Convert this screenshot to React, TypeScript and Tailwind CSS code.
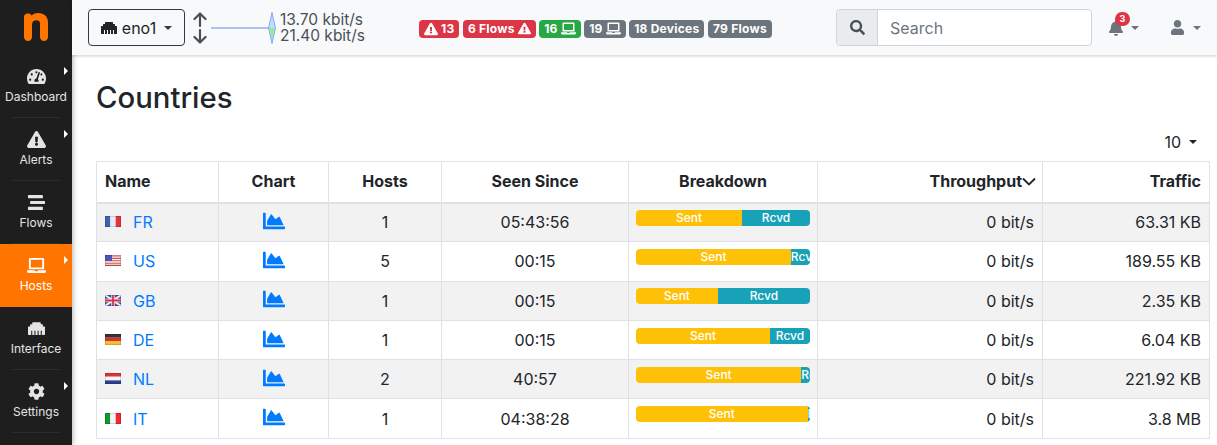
import {
  FaBell,
  FaChartArea,
  FaCog,
  FaEthernet,
  FaExclamationTriangle,
  FaLaptop,
  FaSearch,
  FaStream,
  FaTachometerAlt,
  FaUser,
} from 'react-icons/fa';
import { ReactNode } from 'react';

const menu = [
  { label: 'Dashboard', icon: <FaTachometerAlt size={19} />, arrow: true },
  { label: 'Alerts', icon: <FaExclamationTriangle size={19} />, arrow: true },
  { label: 'Flows', icon: <FaStream size={17} /> },
  { label: 'Hosts', icon: <FaLaptop size={19} />, arrow: true, active: true },
  { label: 'Interface', icon: <FaEthernet size={17} /> },
  { label: 'Settings', icon: <FaCog size={17} />, arrow: true },
];

const flags: Record<string, ReactNode> = {
  FR: (
    <>
      <rect width="5.3" height="11" fill="#3f5fb8" />
      <rect x="5.3" width="5.4" height="11" fill="#e8ebf5" />
      <rect x="10.7" width="5.3" height="11" fill="#e5333b" />
    </>
  ),
  US: (
    <>
      <rect width="16" height="11" fill="#f2f2f2" />
      <path d="M0 1h16M0 3.4h16M0 5.8h16M0 8.2h16M0 10.4h16" stroke="#d4504f" strokeWidth="1.1" />
      <rect width="7" height="6" fill="#4a55b5" />
    </>
  ),
  GB: (
    <>
      <rect width="16" height="11" fill="#3f53a8" />
      <path d="M0 0l16 11M16 0L0 11" stroke="#f3e9ea" strokeWidth="2" />
      <path d="M8 0v11M0 5.500h16" stroke="#f3e9ea" strokeWidth="3.400" />
      <path d="M8 0v11M0 5.500h16" stroke="#d3334a" strokeWidth="1.800" />
    </>
  ),
  DE: (
    <>
      <rect width="16" height="3.700" fill="#333" />
      <rect y="3.700" width="16" height="3.700" fill="#d8322c" />
      <rect y="7.400" width="16" height="3.600" fill="#f0bf2e" />
    </>
  ),
  NL: (
    <>
      <rect width="16" height="3.700" fill="#d8343a" />
      <rect y="3.700" width="16" height="3.700" fill="#f4f4f4" />
      <rect y="7.400" width="16" height="3.600" fill="#2a3f90" />
    </>
  ),
  IT: (
    <>
      <rect width="5.300" height="11" fill="#16942f" />
      <rect x="5.300" width="5.400" height="11" fill="#f4f4f4" />
      <rect x="10.700" width="5.300" height="11" fill="#ee2a2e" />
    </>
  ),
};

const rows = [
  { code: 'FR', hosts: 1, since: '05:43:56', sent: 61, traffic: '63.31 KB' },
  { code: 'US', hosts: 5, since: '00:15', sent: 89, traffic: '189.55 KB' },
  { code: 'GB', hosts: 1, since: '00:15', sent: 47, traffic: '2.35 KB' },
  { code: 'DE', hosts: 1, since: '00:15', sent: 77, traffic: '6.04 KB' },
  { code: 'NL', hosts: 2, since: '40:57', sent: 95, traffic: '221.92 KB' },
  { code: 'IT', hosts: 1, since: '04:38:28', sent: 98.6, traffic: '3.8 MB' },
];

function Caret({ className }: { className: string }) {
  return <span className={`inline-block border-x-[4px] border-t-[4px] border-x-transparent ${className}`} />;
}

function Badge({ color, children }: { color: string; children: ReactNode }) {
  return (
    <span className={`flex h-[18px] items-center gap-[3px] rounded-[4px] px-[5px] text-[12px] font-bold tracking-[0.25px] text-white ${color}`}>
      {children}
    </span>
  );
}

function Sidebar() {
  return (
    <div className="flex w-[72px] shrink-0 flex-col bg-[#1e1e1e] shadow-[0_0_6px_rgba(0,0,0,0.4)]">
      <div className="flex h-[55px] items-start justify-center pt-[13px]">
        <svg width="24" height="28" viewBox="0 0 24 28">
          <path
            d="M0 4C0 2 1.500 .5 4 .5C5.500 .5 7 1 7.500 2.500C9.500 .8 11.500 0 14 0C20 0 24 3.500 24 9.500V24C24 26.300 22.300 28 20 28C17.700 28 16 26.300 16 24V10.500C16 8.500 14.500 7.300 12.500 7.300C10 7.300 8 8.800 8 11.500V24C8 26.300 6.300 28 4 28C1.700 28 0 26.300 0 24Z"
            fill="#ff7500"
          />
        </svg>
      </div>
      {menu.map((item) => (
        <div
          key={item.label}
          className={`relative flex h-[63px] flex-col items-center pt-[11px] ${item.active ? 'bg-[#ff7500] text-white' : 'text-[#e4e4e4]'}`}
        >
          <div className="flex h-[21px] items-center">{item.icon}</div>
          <div className="mt-[1px] text-[12px] leading-[18px]">{item.label}</div>
          {item.arrow && (
            <span className="absolute top-[12px] right-[4px] border-y-[4px] border-l-[4px] border-y-transparent border-l-white" />
          )}
          {!item.active && <span className="absolute right-[12px] bottom-0 left-[12px] h-px bg-[#2c2c2c]" />}
        </div>
      ))}
    </div>
  );
}

function Navbar() {
  return (
    <div className="flex h-[55px] items-center bg-[#f8f9fa] pl-[16px] shadow-[0_1px_3px_rgba(0,0,0,0.2)]">
      <div className="flex h-[37px] w-[97px] items-center justify-center gap-[5px] rounded-[4px] border border-[#343a40] text-[16px] text-[#212529]">
        <FaEthernet size={16} />
        <span>eno1</span>
        <Caret className="ml-[3px] border-t-[#343a40]" />
      </div>
      <svg width="16" height="32" viewBox="0 0 16 32" className="ml-[7px]" fill="none" stroke="#495057" strokeWidth="2.200" strokeLinecap="round" strokeLinejoin="round">
        <path d="M8 14V2M2.500 7L8 1.500L13.500 7" />
        <path d="M8 18V30M2.500 25L8 30.500L13.500 25" />
      </svg>
      <svg width="66" height="32" viewBox="0 0 66 32" className="ml-[3px]">
        <path d="M0 16H58" stroke="#5b8def" strokeWidth="1" />
        <path d="M57.500 16L61 0.500L64.500 16L61 31.500Z" fill="#c6d8fb" stroke="#5b8def" strokeWidth="0.700" />
        <path d="M58 16H64L61 27Z" fill="#90ee90" />
      </svg>
      <div className="ml-[3px] text-[15.500px] leading-[16px] text-[#495057]">
        <div>13.70 kbit/s</div>
        <div>21.40 kbit/s</div>
      </div>
      <div className="mt-[2px] ml-[54px] flex gap-[3.500px]">
        <Badge color="bg-[#dc3545]">
          <FaExclamationTriangle size={14} /> 13
        </Badge>
        <Badge color="bg-[#dc3545]">
          6 Flows <FaExclamationTriangle size={13} />
        </Badge>
        <Badge color="bg-[#28a745]">
          16 <FaLaptop size={15} />
        </Badge>
        <Badge color="bg-[#6c757d]">
          19 <FaLaptop size={15} />
        </Badge>
        <Badge color="bg-[#6c757d]">18 Devices</Badge>
        <Badge color="bg-[#6c757d]">79 Flows</Badge>
      </div>
      <div className="ml-auto flex h-[37px] w-[256px] rounded-[4px] border border-[#ced4da] bg-white">
        <div className="flex w-[41px] items-center justify-center rounded-l-[4px] border-r border-[#ced4da] bg-[#e9ecef] text-[#495057]">
          <FaSearch size={15} />
        </div>
        <div className="flex items-center pl-[12px] text-[16px] text-[#6c757d]">Search</div>
      </div>
      <div className="relative ml-[16px] flex w-[38px] items-center gap-[7px] text-[#6c757d]">
        <FaBell size={16} />
        <Caret className="mt-[1px] border-t-[#6c757d]" />
        <span className="absolute -top-[8px] left-[7px] flex h-[14px] w-[15px] items-center justify-center rounded-full bg-[#dc3545] text-[9px] font-bold text-white">
          3
        </span>
      </div>
      <div className="mr-[16px] ml-[24px] flex items-center gap-[8px] text-[#6c757d]">
        <FaUser size={15} />
        <Caret className="border-t-[#6c757d]" />
      </div>
    </div>
  );
}

function Breakdown({ sent }: { sent: number }) {
  return (
    <div className="flex h-[16px] w-[174px] overflow-hidden rounded-[4px] text-[12px] leading-[16px] font-medium text-white">
      <div className="bg-[#ffc107] text-center" style={{ width: `${sent}%` }}>
        Sent
      </div>
      <div className="flex-1 overflow-hidden bg-[#17a2b8] text-center whitespace-nowrap">Rcvd</div>
    </div>
  );
}

function App() {
  return (
    <div className="flex h-[445px] w-[1217px] overflow-hidden bg-white font-['Inter','Liberation_Sans',sans-serif] text-[#212529]">
      <Sidebar />
      <div className="flex min-w-0 flex-1 flex-col">
        <Navbar />
        <div className="pr-[8px] pl-[24px]">
          <h2 className="mt-[23px] text-[29.300px] leading-[40px] font-medium">Countries</h2>
          <div className="mt-[12px] mb-[7px] flex h-[24px] items-center justify-end gap-[8px] pr-[12px] text-[16px]">
            10 <Caret className="border-t-[#212529]" />
          </div>
          <table className="w-[1113px] table-fixed border-collapse text-[16px]">
            <colgroup>
              <col className="w-[122px]" />
              <col className="w-[110px]" />
              <col className="w-[113px]" />
              <col className="w-[187px]" />
              <col className="w-[189px]" />
              <col className="w-[225px]" />
              <col className="w-[167px]" />
            </colgroup>
            <thead>
              <tr className="h-[41px] border-b-2 border-[#dee2e6] text-[16px] font-bold [&>th]:border-x [&>th]:border-t [&>th]:border-[#dee2e6] [&>th]:pb-[1px]">
                <th className="pl-[8px] text-left">Name</th>
                <th>Chart</th>
                <th>Hosts</th>
                <th>Seen Since</th>
                <th>Breakdown</th>
                <th className="pr-[6px] text-right">
                  Throughput
                  <svg width="14" height="9" viewBox="0 0 14 9" className="inline-block align-[1px]">
                    <path d="M1 1.500L7 7.500L13 1.500" fill="none" stroke="#212529" strokeWidth="1.800" />
                  </svg>
                </th>
                <th className="pr-[8px] text-right">Traffic</th>
              </tr>
            </thead>
            <tbody>
              {rows.map((r, i) => (
                <tr
                  key={r.code}
                  className={`h-[39.300px] border-b border-[#dee2e6] [&>td]:border-x [&>td]:border-[#dee2e6] ${i % 2 === 0 ? 'bg-[#f2f2f2]' : 'bg-white'}`}
                >
                  <td className="pl-[8px]">
                    <div className="flex items-center">
                      <svg width="16" height="11" viewBox="0 0 16 11" className="-mt-[1px]">
                        {flags[r.code]}
                        <rect x="0.250" y="0.250" width="15.500" height="10.500" fill="none" stroke="#000" strokeOpacity="0.250" strokeWidth="0.500" />
                      </svg>
                      <span className="ml-[12px] text-[#007bff]">{r.code}</span>
                    </div>
                  </td>
                  <td>
                    <div className="-mt-[3px] flex justify-center text-[#007bff]">
                      <FaChartArea size={22} />
                    </div>
                  </td>
                  <td className="text-center">{r.hosts}</td>
                  <td className="text-center">{r.since}</td>
                  <td className="pb-[9px] pl-[7px]">
                    <Breakdown sent={r.sent} />
                  </td>
                  <td className="pr-[8px] text-right">0 bit/s</td>
                  <td className="pr-[8px] text-right">{r.traffic}</td>
                </tr>
              ))}
            </tbody>
          </table>
        </div>
      </div>
    </div>
  );
}

export default App;
